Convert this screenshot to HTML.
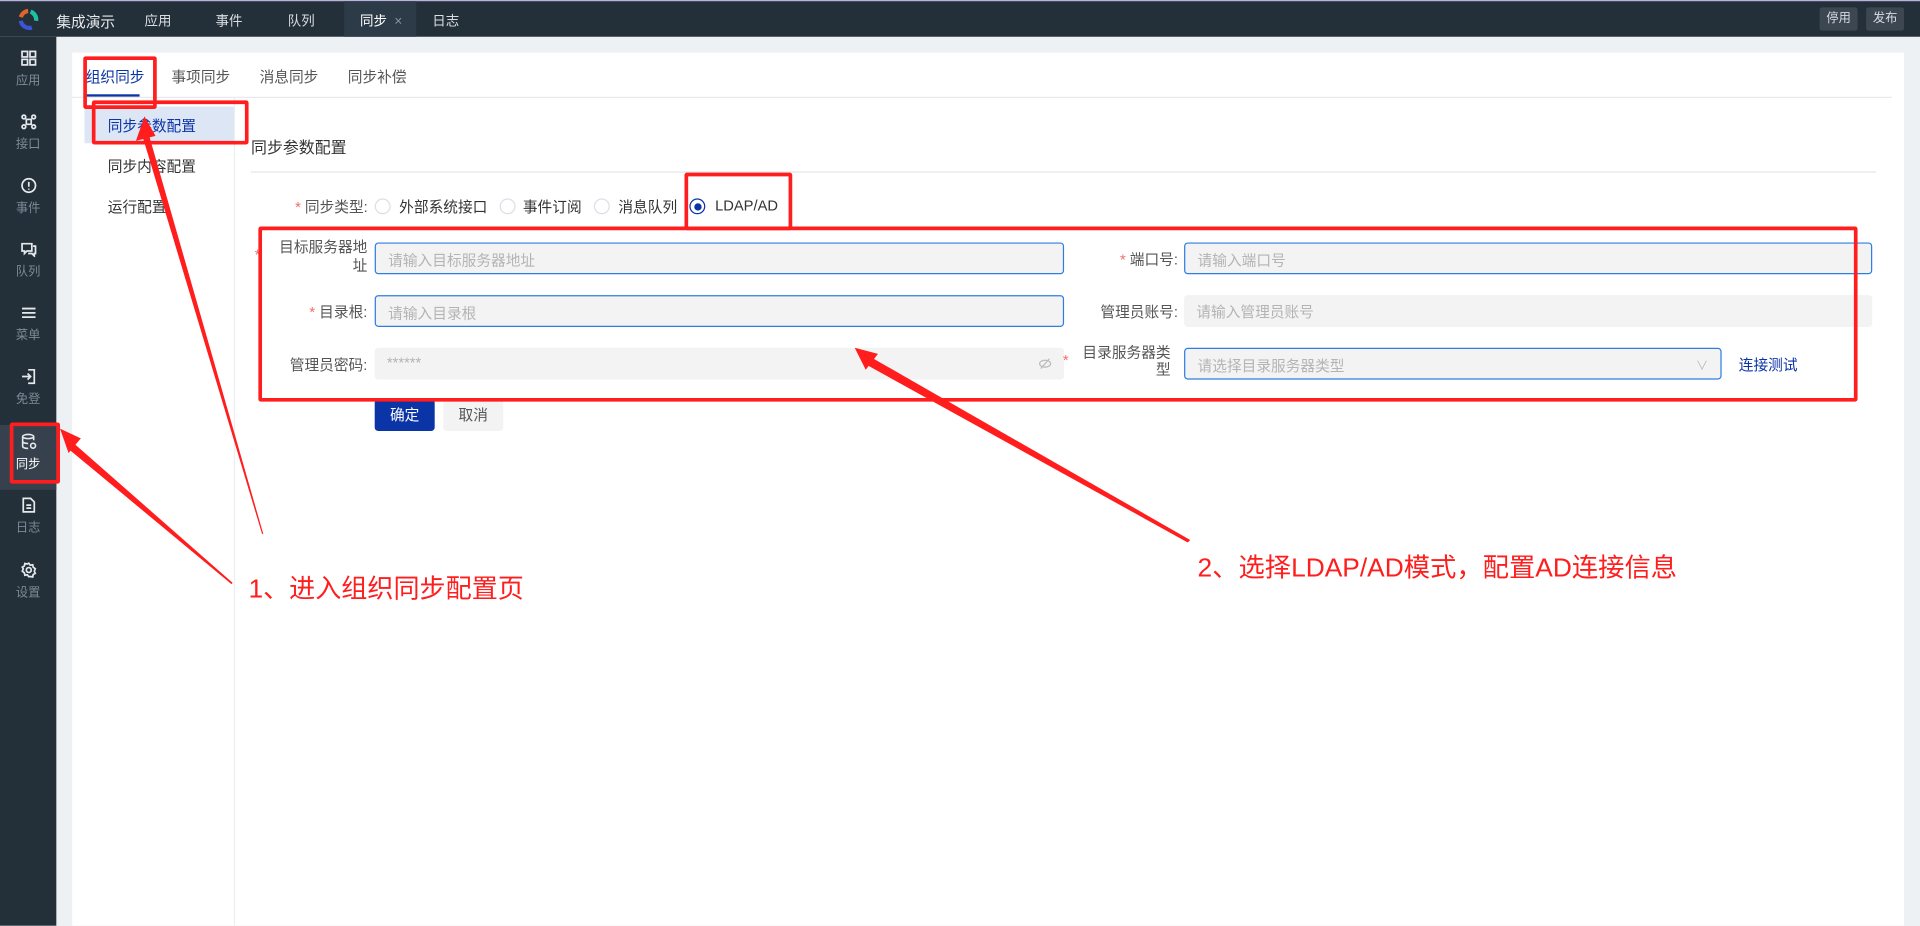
<!DOCTYPE html>
<html><head><meta charset="utf-8">
<style>
*{box-sizing:border-box;margin:0;padding:0}
html,body{width:1920px;height:926px;overflow:hidden;background:#eef1f4}
#s{position:absolute;left:0;top:0;width:1568px;height:756px;transform:scale(1.22449);transform-origin:0 0;font-family:"Liberation Sans","Noto Sans CJK SC",sans-serif;font-size:12px;color:#333;background:#eef1f4}
.a{position:absolute;white-space:nowrap}
.top{position:absolute;left:0;top:0;width:1568px;height:30px;background:#232f39;border-top:1px solid #b9b4d9}
.top .a{color:#d8dde3;top:8px;font-size:11px}
.side{position:absolute;left:0;top:30px;width:46px;height:726px;background:#232f39}
.si{position:absolute;left:0;width:46px;text-align:center;color:#7f8a96;font-size:10px}
.si svg{display:block;margin:0 auto 3px}
.panel{position:absolute;left:59px;top:43px;width:1496px;height:713px;background:#fff}
.inp{position:absolute;height:26px;background:#f3f3f3;border-radius:3px;color:#b4b4b4;padding:5px 10px;font-size:12px}
.bl{border:1px solid #2f7de1}
.lbl{position:absolute;text-align:right;color:#555;font-size:12px}
.st{color:#f56c6c}
.rad{position:absolute;width:13px;height:13px;border:1px solid #dcdfe6;border-radius:50%;background:#fff}
.box{position:absolute;border:3px solid #ff1d1d;border-radius:2px}
</style></head><body><div id="s">
<div class="top">
<svg class="a" style="left:14px;top:6px" width="18" height="18" viewBox="0 0 18 18"><path d="M9 2A7 7 0 0 0 3 7" stroke="#e0642a" stroke-width="3.5" fill="none"/><path d="M11 2.5A7 7 0 0 1 15.5 10" stroke="#1ac3a3" stroke-width="3.5" fill="none"/><path d="M3 10A7 7 0 0 0 12 15.5" stroke="#3a55d8" stroke-width="3.5" fill="none"/></svg>
<div class="a" style="left:46px;font-size:12px;color:#e6e9ec">集成演示</div>
<div class="a" style="left:118px">应用</div>
<div class="a" style="left:176px">事件</div>
<div class="a" style="left:235px">队列</div>
<div class="a" style="left:281px;top:0;width:59px;height:29px;background:#2d3a47"></div>
<div class="a" style="left:294px;color:#fff">同步 <span style="color:#8a95a0;margin-left:3px">×</span></div>
<div class="a" style="left:353px">日志</div>
<div class="a" style="left:1486px;top:5px;width:31px;height:19px;background:#3d4752;border-radius:2px;text-align:center;line-height:19px;padding:0;font-size:10px">停用</div>
<div class="a" style="left:1524px;top:5px;width:31px;height:19px;background:#3d4752;border-radius:2px;text-align:center;line-height:19px;padding:0;font-size:10px">发布</div>
</div>
<div class="side">
<div class="si" style="top:11px"><svg width="13" height="13" viewBox="0 0 13 13" fill="none" stroke="#e6e9ec" stroke-width="1.4"><rect x="1" y="1" width="4.5" height="4.5"/><rect x="7.5" y="1" width="4.5" height="4.5"/><rect x="1" y="7.5" width="4.5" height="4.5"/><rect x="7.5" y="7.5" width="4.5" height="4.5"/></svg>应用</div>
<div class="si" style="top:63px"><svg width="13" height="13" viewBox="0 0 13 13" fill="none" stroke="#e6e9ec" stroke-width="1.4"><circle cx="2.5" cy="2.5" r="1.5"/><circle cx="10.5" cy="2.5" r="1.5"/><circle cx="2.5" cy="10.5" r="1.5"/><circle cx="10.5" cy="10.5" r="1.5"/><rect x="4.5" y="4.5" width="4" height="4"/></svg>接口</div>
<div class="si" style="top:115px"><svg width="13" height="13" viewBox="0 0 13 13" fill="none" stroke="#e6e9ec" stroke-width="1.4"><circle cx="6.5" cy="6.5" r="5.5"/><path d="M6.5 3.5v4M6.5 9v1"/></svg>事件</div>
<div class="si" style="top:167px"><svg width="13" height="13" viewBox="0 0 13 13" fill="none" stroke="#e6e9ec" stroke-width="1.4"><path d="M1 2h8v6H5l-2 2V8H1z M10 4h2v6h-1v2l-2-2H6"/></svg>队列</div>
<div class="si" style="top:219px"><svg width="13" height="13" viewBox="0 0 13 13" stroke="#e6e9ec" stroke-width="1.5"><path d="M1 3h11M1 6.5h11M1 10h11"/></svg>菜单</div>
<div class="si" style="top:271px"><svg width="13" height="13" viewBox="0 0 13 13" fill="none" stroke="#e6e9ec" stroke-width="1.4"><path d="M6 1h5v11H6M1 6.5h7M5.5 4l2.5 2.5L5.5 9"/></svg>免登</div>
<div class="si" style="top:317px;height:53px;background:#37414d;padding-top:7px;color:#fff"><svg width="13" height="13" viewBox="0 0 13 13" fill="none" stroke="#e6e9ec" stroke-width="1.3"><ellipse cx="6" cy="2.5" rx="4.5" ry="1.7"/><path d="M1.5 2.5v8c0 1 2 1.7 4.5 1.7M10.5 2.5v3M1.5 6.5c0 1 2 1.7 4.5 1.7"/><circle cx="10" cy="10" r="2"/></svg>同步</div>
<div class="si" style="top:376px"><svg width="13" height="13" viewBox="0 0 13 13" fill="none" stroke="#e6e9ec" stroke-width="1.4"><path d="M2 1h6l3 3v8H2z M4.5 6.5h4M4.5 9h4"/></svg>日志</div>
<div class="si" style="top:429px"><svg width="13" height="13" viewBox="0 0 13 13" fill="none" stroke="#e6e9ec" stroke-width="1.4"><circle cx="6.5" cy="6.5" r="2"/><path d="M6.5 1l1.2 1.6 2-.4.4 2L11.8 5.5 11 7.5l.8 1.7-1.7 1-.4 2-2-.4L6.5 12l-1.2-1.6-2 .4-.4-2L1.2 7.5 2 5.5 1.2 4.2l1.7-1 .4-2 2 .4z"/></svg>设置</div>
</div>
<div class="panel"></div>
<div class="a" style="left:70px;top:54px;color:#0b34a6">组织同步</div>
<div class="a" style="left:70px;top:77px;width:44px;height:2px;background:#0b34a6"></div>
<div class="a" style="left:140px;top:54px;color:#555">事项同步</div>
<div class="a" style="left:212px;top:54px;color:#555">消息同步</div>
<div class="a" style="left:284px;top:54px;color:#555">同步补偿</div>
<div class="a" style="left:59px;top:79px;width:1486px;height:1px;background:#e8eaed"></div>
<div class="a" style="left:191px;top:80px;width:1px;height:676px;background:#eceef1"></div>
<div class="a" style="left:69px;top:87px;width:122px;height:30px;background:#dde6f5"></div>
<div class="a" style="left:88px;top:94px;color:#0b34a6">同步参数配置</div>
<div class="a" style="left:88px;top:127px;color:#333">同步内容配置</div>
<div class="a" style="left:88px;top:160px;color:#333">运行配置</div>
<div class="a" style="left:205px;top:110px;font-size:13px;color:#333">同步参数配置</div>
<div class="a" style="left:205px;top:140px;width:1327px;height:1px;background:#e3e5e8"></div>
<div class="a" style="left:241px;top:160px;color:#555"><span class="st">*</span> 同步类型:</div>
<div class="rad" style="left:306px;top:162px"></div><div class="a" style="left:326px;top:160px;color:#333">外部系统接口</div>
<div class="rad" style="left:408px;top:162px"></div><div class="a" style="left:427px;top:160px;color:#333">事件订阅</div>
<div class="rad" style="left:485px;top:162px"></div><div class="a" style="left:505px;top:160px;color:#333">消息队列</div>
<div class="rad" style="left:563px;top:162px;border-color:#0b34a6"><div style="position:absolute;left:2.5px;top:2.5px;width:6px;height:6px;border-radius:50%;background:#0b34a6"></div></div><div class="a" style="left:584px;top:161px;color:#333">LDAP/AD</div>
<div class="lbl" style="left:212px;top:195px;width:88px;line-height:15px"><span class="st" style="position:absolute;left:-4px;top:6px">*</span>目标服务器地<br>址</div>
<div class="inp bl" style="left:306px;top:198px;width:563px">请输入目标服务器地址</div>
<div class="lbl" style="left:890px;top:203px;width:72px"><span class="st">*</span> 端口号:</div>
<div class="inp bl" style="left:967px;top:198px;width:562px">请输入端口号</div>
<div class="lbl" style="left:212px;top:246px;width:88px"><span class="st">*</span> 目录根:</div>
<div class="inp bl" style="left:306px;top:241px;width:563px">请输入目录根</div>
<div class="lbl" style="left:880px;top:246px;width:82px">管理员账号:</div>
<div class="inp" style="left:967px;top:241px;width:562px">请输入管理员账号</div>
<div class="lbl" style="left:212px;top:289px;width:88px">管理员密码:</div>
<div class="inp" style="left:306px;top:284px;width:563px">******<svg style="position:absolute;right:10px;top:8px" width="11" height="10" viewBox="0 0 11 10" fill="none" stroke="#bbb"><ellipse cx="5.5" cy="5" rx="4.5" ry="2.8"/><path d="M2 9L9 1"/></svg></div>
<div class="lbl" style="left:868px;top:281px;width:88px;line-height:14px"><span class="st" style="position:absolute;left:0;top:6px">*</span>目录服务器类<br>型</div>
<div class="inp bl" style="left:967px;top:284px;width:439px">请选择目录服务器类型<span style="position:absolute;right:10px;top:5px;color:#bbb;font-size:10px">∨</span></div>
<div class="a" style="left:1420px;top:289px;color:#0b34a6">连接测试</div>
<div class="a" style="left:306px;top:326px;width:49px;height:26px;background:#0b34a6;border-radius:3px;color:#fff;text-align:center;line-height:26px">确定</div>
<div class="a" style="left:362px;top:326px;width:49px;height:26px;background:#f3f3f3;border-radius:3px;color:#555;text-align:center;line-height:26px">取消</div>
<div class="box" style="left:68px;top:46px;width:60px;height:43px"></div>
<div class="box" style="left:75px;top:82px;width:128px;height:36px"></div>
<div class="box" style="left:559px;top:141px;width:88px;height:47px"></div>
<div class="box" style="left:211px;top:185px;width:1306px;height:143px"></div>
<div class="box" style="left:8px;top:345px;width:41px;height:50px"></div>
<svg class="a" style="left:0;top:0" width="1568" height="756">
<g fill="#ff1d1d">
<polygon points="215,436 121,108 116,110 214,436"/>
<polygon points="118,95 111,115 127,111"/>
<polygon points="190,476 58,360 54,365 189,477"/>
<polygon points="49,350 56,370 66,358"/>
<polygon points="972,441 710,291 706,297 970,443"/>
<polygon points="698,284 707,302 717,289"/>
</g>
<text x="203" y="488" font-size="21.3" fill="#ff1d1d" font-family="Liberation Sans, Noto Sans CJK SC, sans-serif">1、进入组织同步配置页</text>
<text x="978" y="471" font-size="21.5" fill="#ff1d1d" font-family="Liberation Sans, Noto Sans CJK SC, sans-serif">2、选择LDAP/AD模式，配置AD连接信息</text>
</svg>
</div></body></html>
